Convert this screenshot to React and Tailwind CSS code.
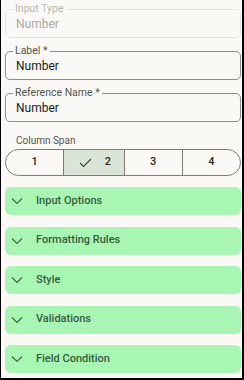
import React from 'react';

const sections = ['Input Options', 'Formatting Rules', 'Style', 'Validations', 'Field Condition'];

const Field = ({ label, value, disabled }) => (
  <fieldset
    className={`rounded-[5px] border px-[10px] pb-[4px] ${disabled ? 'border-[#e6e3dc]' : 'border-[#8f8f8a]'}`}
  >
    <legend className={`ml-[-3px] px-[2px] text-[10.5px] leading-[12px] ${disabled ? 'text-[#b9b8b2]' : 'text-[#55554f]'}`}>
      {label}
    </legend>
    <div className={`text-[12px] leading-[18px] ${disabled ? 'text-[#aaa9a3]' : 'text-[#1b1b18]'}`}>{value}</div>
  </fieldset>
);

const Chevron = () => (
  <svg width="12" height="12" viewBox="0 0 12 12" fill="none" stroke="#3f6b45" strokeWidth="1.2">
    <path d="M1 3.5 L6 8.5 L11 3.5" />
  </svg>
);

const Check = () => (
  <svg width="13" height="10" viewBox="0 0 13 10" fill="none" stroke="#3d3d3a" strokeWidth="1.1">
    <path d="M1 5 L4.5 8.5 L12 1" />
  </svg>
);

export default function App() {
  return (
    <div
      className="h-[380px] w-[244px] overflow-hidden border-b-2 border-l border-r-2 border-black bg-[#faf9f5] pl-1 pr-px pt-[3px]"
      style={{ fontFamily: 'Roboto, "Liberation Sans", sans-serif' }}
    >
      <div className="flex flex-col gap-[7px]">
        <Field label="Input Type" value="Number" disabled />
        <Field label="Label *" value="Number" />
        <Field label="Reference Name *" value="Number" />
      </div>

      <div className="mt-[12px] pl-[11px] text-[10px] leading-[14px] text-[#55554f]">Column Span</div>
      <div className="mt-[1px] flex h-[27px] overflow-hidden rounded-full border border-[#7d7d78] text-[11px] font-medium text-[#2a2a27]">
        <div className="flex flex-1 items-center justify-center">1</div>
        <div className="flex flex-1 items-center justify-center gap-[13px] border-l border-[#7d7d78] bg-[#dbe5d7] pl-[2px]">
          <Check />
          <span>2</span>
        </div>
        <div className="flex flex-1 items-center justify-center border-l border-[#7d7d78]">3</div>
        <div className="flex flex-1 items-center justify-center border-l border-[#7d7d78]">4</div>
      </div>

      <div className="mt-[11px] flex flex-col gap-[11.5px]">
        {sections.map((s) => (
          <div
            key={s}
            className="flex h-[28px] items-center gap-[13px] rounded-[6px] bg-[#a9f5b3] pl-[6px] text-[11px] font-medium text-[#33603a]"
          >
            <Chevron />
            <span>{s}</span>
          </div>
        ))}
      </div>
    </div>
  );
}
